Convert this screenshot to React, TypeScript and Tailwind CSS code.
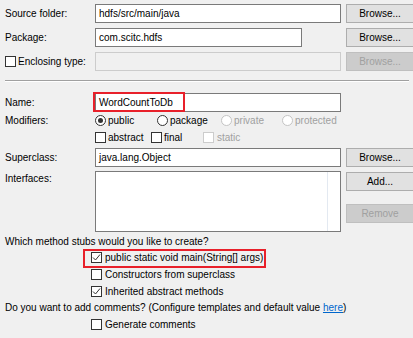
import React from "react";

const font = { fontFamily: '"Liberation Sans", Arial, sans-serif' };

function Btn({ label, disabled }: { label: string; disabled?: boolean }) {
  return (
    <div
      className={
        disabled
          ? "h-[19px] w-[68px] flex items-center justify-center border border-[#bfbfbf] bg-[#cccccc] text-[#a0a0a0]"
          : "h-[19px] w-[68px] flex items-center justify-center border border-[#adadad] bg-[#e1e1e1] text-black"
      }
    >
      {label}
    </div>
  );
}

function TextBox({ value, w = "w-[246px]", disabled }: { value?: string; w?: string; disabled?: boolean }) {
  return (
    <div
      className={
        (disabled ? "border-[#cccccc] bg-[#f0f0f0] " : "border-[#7a7a7a] bg-white ") +
        w +
        " h-[19px] border flex items-center pl-[3px] text-black"
      }
    >
      {value}
    </div>
  );
}

function Check({ checked, disabled }: { checked?: boolean; disabled?: boolean }) {
  return (
    <div
      className={
        (disabled ? "border-[#cccccc] " : "border-[#333333] ") +
        "w-[11px] h-[11px] border bg-white flex items-center justify-center shrink-0"
      }
    >
      {checked && (
        <svg width="9" height="9" viewBox="0 0 9 9">
          <path d="M1 4.5 L3.5 7 L8 1.5" fill="none" stroke="#333" strokeWidth="1" />
        </svg>
      )}
    </div>
  );
}

function Radio({ selected, disabled }: { selected?: boolean; disabled?: boolean }) {
  return (
    <div
      className={
        (disabled ? "border-[#c4c4c4] " : "border-[#333333] ") +
        "w-[11px] h-[11px] rounded-full border bg-white flex items-center justify-center shrink-0"
      }
    >
      {selected && <div className="w-[5px] h-[5px] rounded-full bg-[#333333]" />}
    </div>
  );
}

function Row({
  label,
  children,
  right,
  cls,
}: {
  label?: React.ReactNode;
  children?: React.ReactNode;
  right?: React.ReactNode;
  cls?: string;
}) {
  return (
    <div className={"grid grid-cols-[85px_246px_68px] gap-x-[5px] pl-[5px] " + (cls ?? "h-[19px]")}>
      <div className="flex items-center whitespace-nowrap">{label}</div>
      <div>{children}</div>
      <div>{right}</div>
    </div>
  );
}

export default function App() {
  return (
    <div
      className="w-[413px] h-[338px] bg-[#f0f0f0] text-[10px] leading-none text-black overflow-hidden whitespace-nowrap"
      style={font}
    >
      <div className="pt-[4px] flex flex-col">
        <Row label="Source folder:" right={<Btn label="Browse..." />}>
          <TextBox value="hdfs/src/main/java" />
        </Row>
        <Row cls="h-[19px] mt-[5px]" label="Package:" right={<Btn label="Browse..." />}>
          <TextBox value="com.scitc.hdfs" w="w-[207px]" />
        </Row>
        <Row
          cls="h-[19px] mt-[5px]"
          label={
            <div className="flex items-center gap-[2px]">
              <Check />
              <span>Enclosing type:</span>
            </div>
          }
          right={<Btn label="Browse..." disabled />}
        >
          <TextBox disabled />
        </Row>

        <div className="ml-[5px] mt-[9px] h-[2px] w-[404px] border-t border-b border-t-[#a0a0a0] border-b-white" />

        <Row cls="h-[19px] mt-[11px]" label="Name:">
          <div className="relative">
            <TextBox value="WordCountToDb" />
            <div className="absolute left-[-2px] top-[-1px] w-[92px] h-[20px] border-2 border-[#e8202a]" />
          </div>
        </Row>

        <Row cls="h-[17px]" label="Modifiers:">
          <div className="h-[17px] flex items-center">
            <div className="flex items-center gap-[2px] w-[62px]">
              <Radio selected />
              <span>public</span>
            </div>
            <div className="flex items-center gap-[2px] w-[64px]">
              <Radio />
              <span>package</span>
            </div>
            <div className="flex items-center gap-[2px] w-[61px] text-[#a0a0a0]">
              <Radio disabled />
              <span>private</span>
            </div>
            <div className="flex items-center gap-[2px] text-[#a0a0a0]">
              <Radio disabled />
              <span>protected</span>
            </div>
          </div>
        </Row>

        <Row cls="h-[17px]">
          <div className="h-[17px] flex items-center">
            <div className="flex items-center gap-[2px] w-[56px]">
              <Check />
              <span>abstract</span>
            </div>
            <div className="flex items-center gap-[2px] w-[52px]">
              <Check />
              <span>final</span>
            </div>
            <div className="flex items-center gap-[3px] text-[#a0a0a0]">
              <Check disabled />
              <span>static</span>
            </div>
          </div>
        </Row>

        <Row cls="h-[19px] mt-[2px]" label="Superclass:" right={<Btn label="Browse..." />}>
          <TextBox value="java.lang.Object" />
        </Row>

        <div className="grid grid-cols-[85px_246px_68px] gap-x-[5px] pl-[5px] mt-[4px] h-[61px]">
          <div className="pt-[3px]">Interfaces:</div>
          <div className="h-[61px] border border-[#7a7a7a] bg-white flex justify-end">
            <div className="w-[13px] border-l border-[#e3e9f1] h-full" />
          </div>
          <div className="flex flex-col pt-[1px] gap-[13px]">
            <Btn label="Add..." />
            <Btn label="Remove" disabled />
          </div>
        </div>

        <div className="pl-[5px] mt-[4px] h-[12px] flex items-center">
          Which method stubs would you like to create?
        </div>

        <div className="pl-[91px] flex flex-col mt-[1px]">
          <div className="relative h-[17px] flex items-center gap-[3px]">
            <Check checked />
            <span>public static void main(String[] args)</span>
            <div className="absolute left-[-8px] top-0 w-[183px] h-[19px] border-2 border-[#e8202a]" />
          </div>
          <div className="h-[17px] flex items-center gap-[3px]">
            <Check />
            <span>Constructors from superclass</span>
          </div>
          <div className="h-[17px] flex items-center gap-[3px]">
            <Check checked />
            <span>Inherited abstract methods</span>
          </div>
        </div>

        <div className="pl-[5px] h-[16px] flex items-center">
          Do you want to add comments? (Configure templates and default value&nbsp;
          <span className="text-[#0066cc] underline">here</span>)
        </div>

        <div className="pl-[91px] h-[17px] flex items-center gap-[3px]">
          <Check />
          <span>Generate comments</span>
        </div>
      </div>
    </div>
  );
}
